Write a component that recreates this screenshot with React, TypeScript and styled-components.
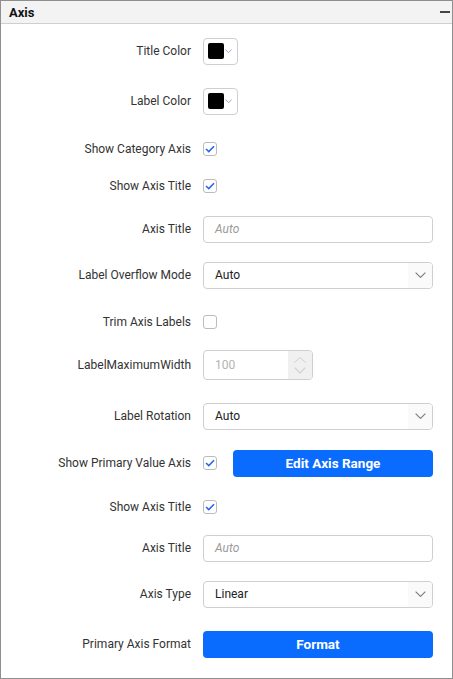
import styled, { createGlobalStyle } from 'styled-components';

const GlobalStyle = createGlobalStyle`
  html, body {
    margin: 0;
    padding: 0;
    background: #fff;
  }
  body {
    font-family: Roboto, "Liberation Sans", Arial, sans-serif;
  }
`;

const Panel = styled.div`
  width: 453px;
  height: 679px;
  box-sizing: border-box;
  border: 1px solid #8f8f8f;
  background: #fff;
  overflow: hidden;
`;

const Header = styled.div`
  height: 22px;
  display: flex;
  align-items: center;
  justify-content: space-between;
  padding: 0 2px 0 8px;
  background: #f3f3f3;
  border-bottom: 1px solid #cfcfcf;
`;

const HeaderTitle = styled.span`
  font-size: 13px;
  font-weight: 700;
  color: #111;
`;

const Minus = styled.span`
  width: 10px;
  height: 2px;
  background: #444;
`;

const Body = styled.div`
  padding: 13px 19px 0 0;
  display: flex;
  flex-direction: column;
`;

const Row = styled.div<{ $top: number; $h?: number }>`
  display: grid;
  grid-template-columns: 190px 1fr;
  column-gap: 12px;
  align-items: center;
  height: ${(p) => p.$h ?? 28}px;
  margin-top: ${(p) => p.$top}px;
`;

const Label = styled.label`
  text-align: right;
  font-size: 12px;
  color: #333;
  white-space: nowrap;
`;

const Controls = styled.div`
  display: flex;
  align-items: center;
  gap: 16px;
`;

const ColorPicker = styled.div`
  width: 35px;
  height: 27px;
  box-sizing: border-box;
  border: 1px solid #cfcfcf;
  border-radius: 4px;
  display: flex;
  align-items: center;
  padding-left: 4px;
  gap: 1px;
`;

const Swatch = styled.span`
  width: 16px;
  height: 16px;
  background: #000;
  border-radius: 2px;
`;

const Box = styled.span`
  width: 14px;
  height: 14px;
  box-sizing: border-box;
  border: 1px solid #bcbcbc;
  border-radius: 3px;
  display: flex;
  align-items: center;
  justify-content: center;
  background: #fff;
  flex: none;
`;

const Field = styled.div`
  height: 27px;
  box-sizing: border-box;
  border: 1px solid #cfcfcf;
  border-radius: 4px;
  display: flex;
  align-items: center;
  overflow: hidden;
  background: #fff;
`;

const FieldText = styled.span<{ $placeholder?: boolean; $disabled?: boolean }>`
  flex: 1;
  padding-left: 11px;
  font-size: 12px;
  font-style: ${(p) => (p.$placeholder ? 'italic' : 'normal')};
  color: ${(p) => (p.$placeholder ? '#9a9a9a' : p.$disabled ? '#b3b3b3' : '#222')};
`;

const Arrow = styled.span`
  width: 24px;
  align-self: stretch;
  display: flex;
  align-items: center;
  justify-content: center;
  background: #fafafa;
`;

const Numeric = styled(Field)`
  width: 110px;
  height: 30px;
`;

const Spinner = styled.span`
  width: 24px;
  align-self: stretch;
  display: flex;
  flex-direction: column;
  align-items: center;
  justify-content: center;
  gap: 4px;
  background: #f0f0f0;
`;

const Button = styled.button`
  flex: 1;
  height: 27px;
  border: none;
  border-radius: 4px;
  background: #0a6cff;
  color: #fff;
  font-family: Roboto, "Liberation Sans", Arial, sans-serif;
  font-size: 13.5px;
  font-weight: 700;
  cursor: pointer;
`;

const Check = () => (
  <svg width="10" height="8" viewBox="0 0 10 8">
    <polyline points="1,4 3.8,6.6 9,1.2" fill="none" stroke="#2b66f0" strokeWidth="1.6" />
  </svg>
);

const Chevron = ({ size = 10, color = '#777' }: { size?: number; color?: string }) => (
  <svg width={size} height={size / 2 + 1} viewBox="0 0 10 6">
    <polyline points="0.5,0.5 5,5 9.5,0.5" fill="none" stroke={color} strokeWidth="1" />
  </svg>
);

const Checkbox = ({ checked }: { checked?: boolean }) => <Box>{checked && <Check />}</Box>;

const Dropdown = ({ value }: { value: string }) => (
  <Field>
    <FieldText>{value}</FieldText>
    <Arrow>
      <Chevron size={11} color="#7a7a7a" />
    </Arrow>
  </Field>
);

const TextInput = ({ placeholder }: { placeholder: string }) => (
  <Field>
    <FieldText $placeholder>{placeholder}</FieldText>
  </Field>
);

const Color = () => (
  <ColorPicker>
    <Swatch />
    <Chevron size={7} color="#6f7fa8" />
  </ColorPicker>
);

export default function App() {
  return (
    <Panel>
      <GlobalStyle />
      <Header>
        <HeaderTitle>Axis</HeaderTitle>
        <Minus />
      </Header>
      <Body>
        <Row $top={0}>
          <Label>Title Color</Label>
          <Color />
        </Row>
        <Row $top={22}>
          <Label>Label Color</Label>
          <Color />
        </Row>
        <Row $top={20}>
          <Label>Show Category Axis</Label>
          <Checkbox checked />
        </Row>
        <Row $top={9}>
          <Label>Show Axis Title</Label>
          <Checkbox checked />
        </Row>
        <Row $top={15}>
          <Label>Axis Title</Label>
          <TextInput placeholder="Auto" />
        </Row>
        <Row $top={18}>
          <Label>Label Overflow Mode</Label>
          <Dropdown value="Auto" />
        </Row>
        <Row $top={19}>
          <Label>Trim Axis Labels</Label>
          <Checkbox />
        </Row>
        <Row $top={14} $h={30}>
          <Label>LabelMaximumWidth</Label>
          <Numeric>
            <FieldText $disabled>100</FieldText>
            <Spinner>
              <svg width="12" height="6" viewBox="0 0 12 6">
                <polyline points="0.5,5.5 6,0.5 11.5,5.5" fill="none" stroke="#cfcfcf" strokeWidth="1" />
              </svg>
              <Chevron size={12} color="#cfcfcf" />
            </Spinner>
          </Numeric>
        </Row>
        <Row $top={22}>
          <Label>Label Rotation</Label>
          <Dropdown value="Auto" />
        </Row>
        <Row $top={19}>
          <Label>Show Primary Value Axis</Label>
          <Controls>
            <Checkbox checked />
            <Button>Edit Axis Range</Button>
          </Controls>
        </Row>
        <Row $top={16}>
          <Label>Show Axis Title</Label>
          <Checkbox checked />
        </Row>
        <Row $top={13}>
          <Label>Axis Title</Label>
          <TextInput placeholder="Auto" />
        </Row>
        <Row $top={18}>
          <Label>Axis Type</Label>
          <Dropdown value="Linear" />
        </Row>
        <Row $top={22}>
          <Label>Primary Axis Format</Label>
          <Controls>
            <Button>Format</Button>
          </Controls>
        </Row>
      </Body>
    </Panel>
  );
}
